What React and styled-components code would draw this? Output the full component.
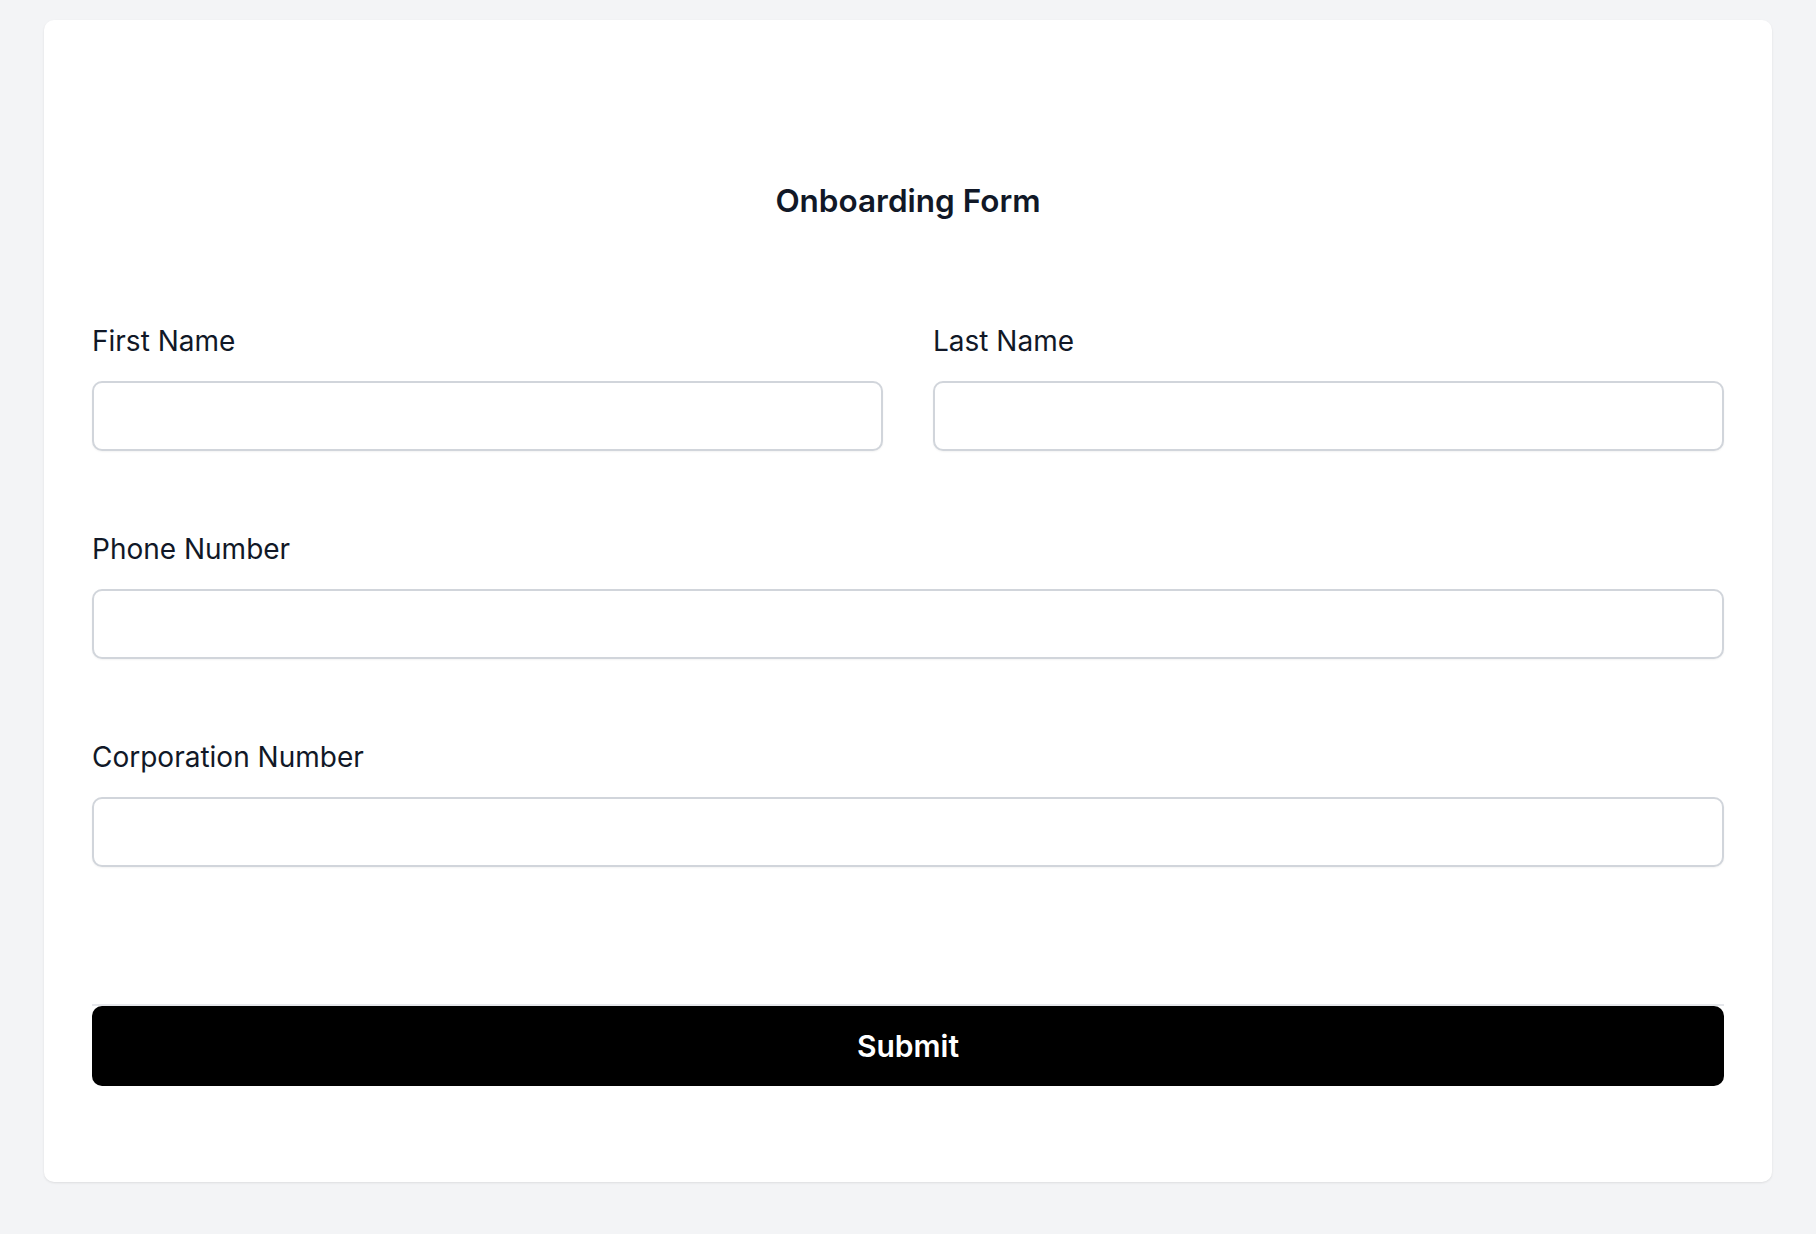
import React from 'react'
import styled, { createGlobalStyle } from 'styled-components'

const GlobalStyle = createGlobalStyle`
    * { box-sizing: border-box; }
    body {
        margin: 0;
        background: #f3f4f6;
        font-family: Inter, "Noto Sans", "Liberation Sans", sans-serif;
        color: #111827;
    }
`

const Page = styled.div`
    padding: 20px 44px 52px;
`

const Card = styled.form`
    background: #ffffff;
    border-radius: 10px;
    box-shadow: 0 1px 3px rgba(0, 0, 0, 0.06), 0 1px 2px rgba(0, 0, 0, 0.04);
    padding: 163px 48px 96px;
    display: flex;
    flex-direction: column;
`

const Title = styled.h1`
    margin: 0 0 104px;
    font-size: 31.5px;
    line-height: 36px;
    font-weight: 600;
    text-align: center;
    color: #111827;
`

const Row = styled.div`
    display: grid;
    grid-template-columns: repeat(${props => props.cols || 1}, 1fr);
    column-gap: 50px;
    margin-bottom: ${props => props.gap || 80}px;
`

const Field = styled.div`
    display: flex;
    flex-direction: column;
`

const Label = styled.label`
    font-size: 28px;
    line-height: 36px;
    font-weight: 400;
    color: #111827;
    margin-bottom: 22px;
`

const Input = styled.input`
    height: 70px;
    width: 100%;
    border: 2px solid #d1d5db;
    border-radius: 10px;
    padding: 0 18px;
    font-size: 26px;
    font-family: inherit;
    outline: none;
    box-shadow: 0 1px 2px rgba(0, 0, 0, 0.05);
    background: #fff;
`

const Divider = styled.div`
    height: 2px;
    background: #e5e7eb;
    margin-top: 57px;
`

const SubmitButton = styled.button`
    height: 80px;
    border: 0;
    border-radius: 10px;
    background: #000000;
    color: #ffffff;
    font-family: inherit;
    font-size: 30px;
    font-weight: 600;
    cursor: pointer;
`

function TextField({ label, id }) {
    return (
        <Field>
            <Label htmlFor={id}>{label}</Label>
            <Input id={id} type="text" />
        </Field>
    )
}

function App() {
    return (
        <Page>
            <GlobalStyle />
            <Card onSubmit={e => e.preventDefault()}>
                <Title>Onboarding Form</Title>
                <Row cols={2}>
                    <TextField label="First Name" id="firstName" />
                    <TextField label="Last Name" id="lastName" />
                </Row>
                <Row>
                    <TextField label="Phone Number" id="phone" />
                </Row>
                <Row gap={0}>
                    <TextField label="Corporation Number" id="corp" />
                </Row>
                <Divider />
                <SubmitButton type="submit">Submit</SubmitButton>
            </Card>
        </Page>
    )
}

export default App
